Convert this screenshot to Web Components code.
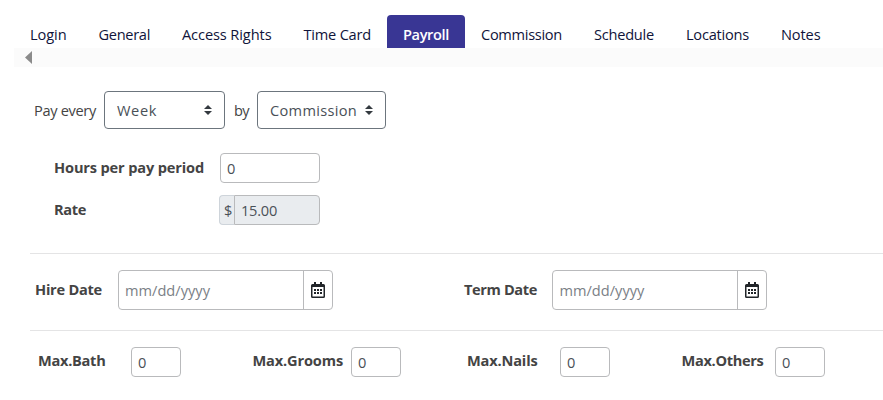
<!DOCTYPE html>
<html lang="en"><head><meta charset="utf-8"><title>Payroll</title>
<style>
html,body{margin:0;background:#fff}
body{width:883px;height:400px;overflow:hidden;font-family:"Open Sans","Noto Sans",sans-serif;font-size:14.6px;color:#444}
</style></head><body>
<pay-page></pay-page>
<script>
const define=(name,html,setup)=>customElements.define(name,class extends HTMLElement{
 connectedCallback(){
  if(this.shadowRoot)return;
  const t=document.createElement('template');
  t.innerHTML=html;
  this.attachShadow({mode:'open'}).append(t.content.cloneNode(true));
  if(setup)setup(this,this.shadowRoot);
 }
});

/* Single line of text whose tracking is tuned to fill a given width. */
define('fit-text',`<style>
:host{display:block;flex:none;line-height:20px;height:20px;white-space:nowrap}
:host([bold]){font-weight:700}
span{display:inline-block}
</style><span><slot></slot></span>`,(el,root)=>{
 const w=+el.getAttribute('w'),s=root.querySelector('span');
 el.style.width=w+'px';
 s.style.letterSpacing=(w-s.getBoundingClientRect().width)/el.textContent.length+'px';
});

define('nav-tab',`<style>
:host{display:block;box-sizing:border-box;height:33px;padding:9px 16px 0;color:#10143a;flex:none}
:host([active]){background:#393694;color:#fff;font-weight:600;border-radius:4px 4px 0 0}
</style><slot></slot>`);

define('tab-bar',`<style>
:host{display:block;padding:15px 0 0 14px}
nav{display:flex}
.track{height:19px;background:#fbfbfb;display:flex;align-items:center;padding-left:11px}
svg{display:block}
</style><nav><slot></slot></nav><div class="track"><svg width="7" height="13" viewBox="0 0 7 13"><path d="M0 6.5 7 0v13z" fill="#8b8b8b"/></svg></div>`);

define('select-box',`<style>
:host{display:flex;box-sizing:border-box;height:38px;border:1px solid #6c757d;border-radius:4px;padding:8px 12px 0 12px;justify-content:space-between;flex:none;background:#fff;color:#495057}
svg{margin-top:5px}
</style><slot></slot><svg width="8" height="10" viewBox="0 0 8 10"><path d="M4 0 8 4H0zM0 6h8l-4 4z" fill="#343a40"/></svg>`);

define('text-box',`<style>
:host{display:flex;box-sizing:border-box;width:50px;height:30px;border:1px solid #b9babc;border-radius:4px;padding:4px 6px 0;background:#fff;flex:none;color:#495057}
:host([wide]){width:100px}
</style><slot></slot>`);

define('money-box',`<style>
:host{display:flex;box-sizing:border-box;width:101px;height:30px;flex:none;color:#495057}
div{box-sizing:border-box;border:1px solid #b9babc;background:#e9ecef;padding:4px 6px 0}
.sign{width:15px;border-color:#ced4da;border-right:0;border-radius:4px 0 0 4px;padding-left:4px}
.value{flex:1;border-radius:0 4px 4px 0;padding-left:6px}
</style><div class="sign"><slot name="sign"></slot></div><div class="value"><slot></slot></div>`);

define('date-box',`<style>
:host{display:flex;box-sizing:border-box;width:215px;height:40px;border:1px solid #b9babc;border-radius:4px;background:#fff;flex:none;color:#7a8086}
.field{flex:1;padding:9px 0 0 6px}
.button{width:28px;border-left:1px solid #b9babc;display:flex;justify-content:center;padding-top:11px}
</style><div class="field"><slot></slot></div><div class="button"><svg width="14" height="16" viewBox="0 0 14 16"><path fill="#212529" fill-rule="evenodd" d="M3 0h2v2h4V0h2v2h1.5Q14 2 14 3.5v11Q14 16 12.500 16h-11Q0 16 0 14.500v-11Q0 2 1.500 2H3zM1.500 5v9.500h11V5z"/><path fill="#212529" d="M3 7h2v2H3zM6 7h2v2H6zM9 7h2v2H9zM3 10h2v2H3zM6 10h2v2H6zM9 10h2v2H9z"/></svg></div>`);

define('form-row',`<style>
:host{display:flex;align-items:flex-start}
</style><slot></slot>`);

define('pay-page',`<style>
:host{display:block;width:883px;height:400px;overflow:hidden}
.pay{padding:24px 0 0 34px}
.pay fit-text.label,.label{margin-top:9px}
.hours{padding:24px 0 0 54px}.rate{padding:12px 0 0 54px}
.hours .label,.rate .label{margin-top:4px}
hr{border:0;height:1px;background:#e4e4e5;margin:28px 0 0 30px}
.dates{padding:16px 0 0 35px}
.dates .label{margin-top:9px}
hr.second{margin-top:20px}
.max{display:grid;grid-template-columns:214.5px 214.5px 214.5px 1fr;padding:16px 0 0 38px}
.max .label{margin-top:3px}
</style>
<tab-bar>
<nav-tab><fit-text w="36.6">Login</fit-text></nav-tab><nav-tab><fit-text w="51.4">General</fit-text></nav-tab><nav-tab><fit-text w="89.5">Access Rights</fit-text></nav-tab><nav-tab><fit-text w="67.5">Time Card</fit-text></nav-tab><nav-tab active><fit-text w="46">Payroll</fit-text></nav-tab><nav-tab><fit-text w="81">Commission</fit-text></nav-tab><nav-tab><fit-text w="60">Schedule</fit-text></nav-tab><nav-tab><fit-text w="63">Locations</fit-text></nav-tab><nav-tab><fit-text w="39.500">Notes</fit-text></nav-tab>
</tab-bar>
<form-row class="pay"><fit-text class="label" w="62">Pay every</fit-text><select-box style="width:121px;margin:0 9px 0 8px"><fit-text w="40">Week</fit-text></select-box><fit-text class="label" w="15">by</fit-text><select-box style="width:129px;margin-left:8px"><fit-text w="87">Commission</fit-text></select-box></form-row>
<form-row class="hours"><fit-text bold class="label" w="150" style="margin-right:16px">Hours per pay period</fit-text><text-box wide><fit-text w="8.3">0</fit-text></text-box></form-row>
<form-row class="rate"><fit-text bold class="label" w="32" style="margin-right:133px">Rate</fit-text><money-box><fit-text slot="sign" w="8">$</fit-text><fit-text w="36">15.00</fit-text></money-box></form-row>
<hr>
<form-row class="dates"><fit-text bold class="label" w="67" style="margin-right:16px">Hire Date</fit-text><date-box><fit-text w="85">mm/dd/yyyy</fit-text></date-box><fit-text bold class="label" w="73" style="margin:9px 15.4px 0 131px">Term Date</fit-text><date-box><fit-text w="85">mm/dd/yyyy</fit-text></date-box></form-row>
<hr class="second">
<div class="max">
<form-row><fit-text bold class="label" w="67.5" style="margin-right:25.5px">Max.Bath</fit-text><text-box><fit-text w="8.3">0</fit-text></text-box></form-row>
<form-row><fit-text bold class="label" w="90.5" style="margin-right:8px">Max.Grooms</fit-text><text-box><fit-text w="8.3">0</fit-text></text-box></form-row>
<form-row><fit-text bold class="label" w="70.5" style="margin-right:22.5px">Max.Nails</fit-text><text-box><fit-text w="8.3">0</fit-text></text-box></form-row>
<form-row><fit-text bold class="label" w="82" style="margin-right:11.5px">Max.Others</fit-text><text-box><fit-text w="8.3">0</fit-text></text-box></form-row>
</div>`);
</script></body></html>
